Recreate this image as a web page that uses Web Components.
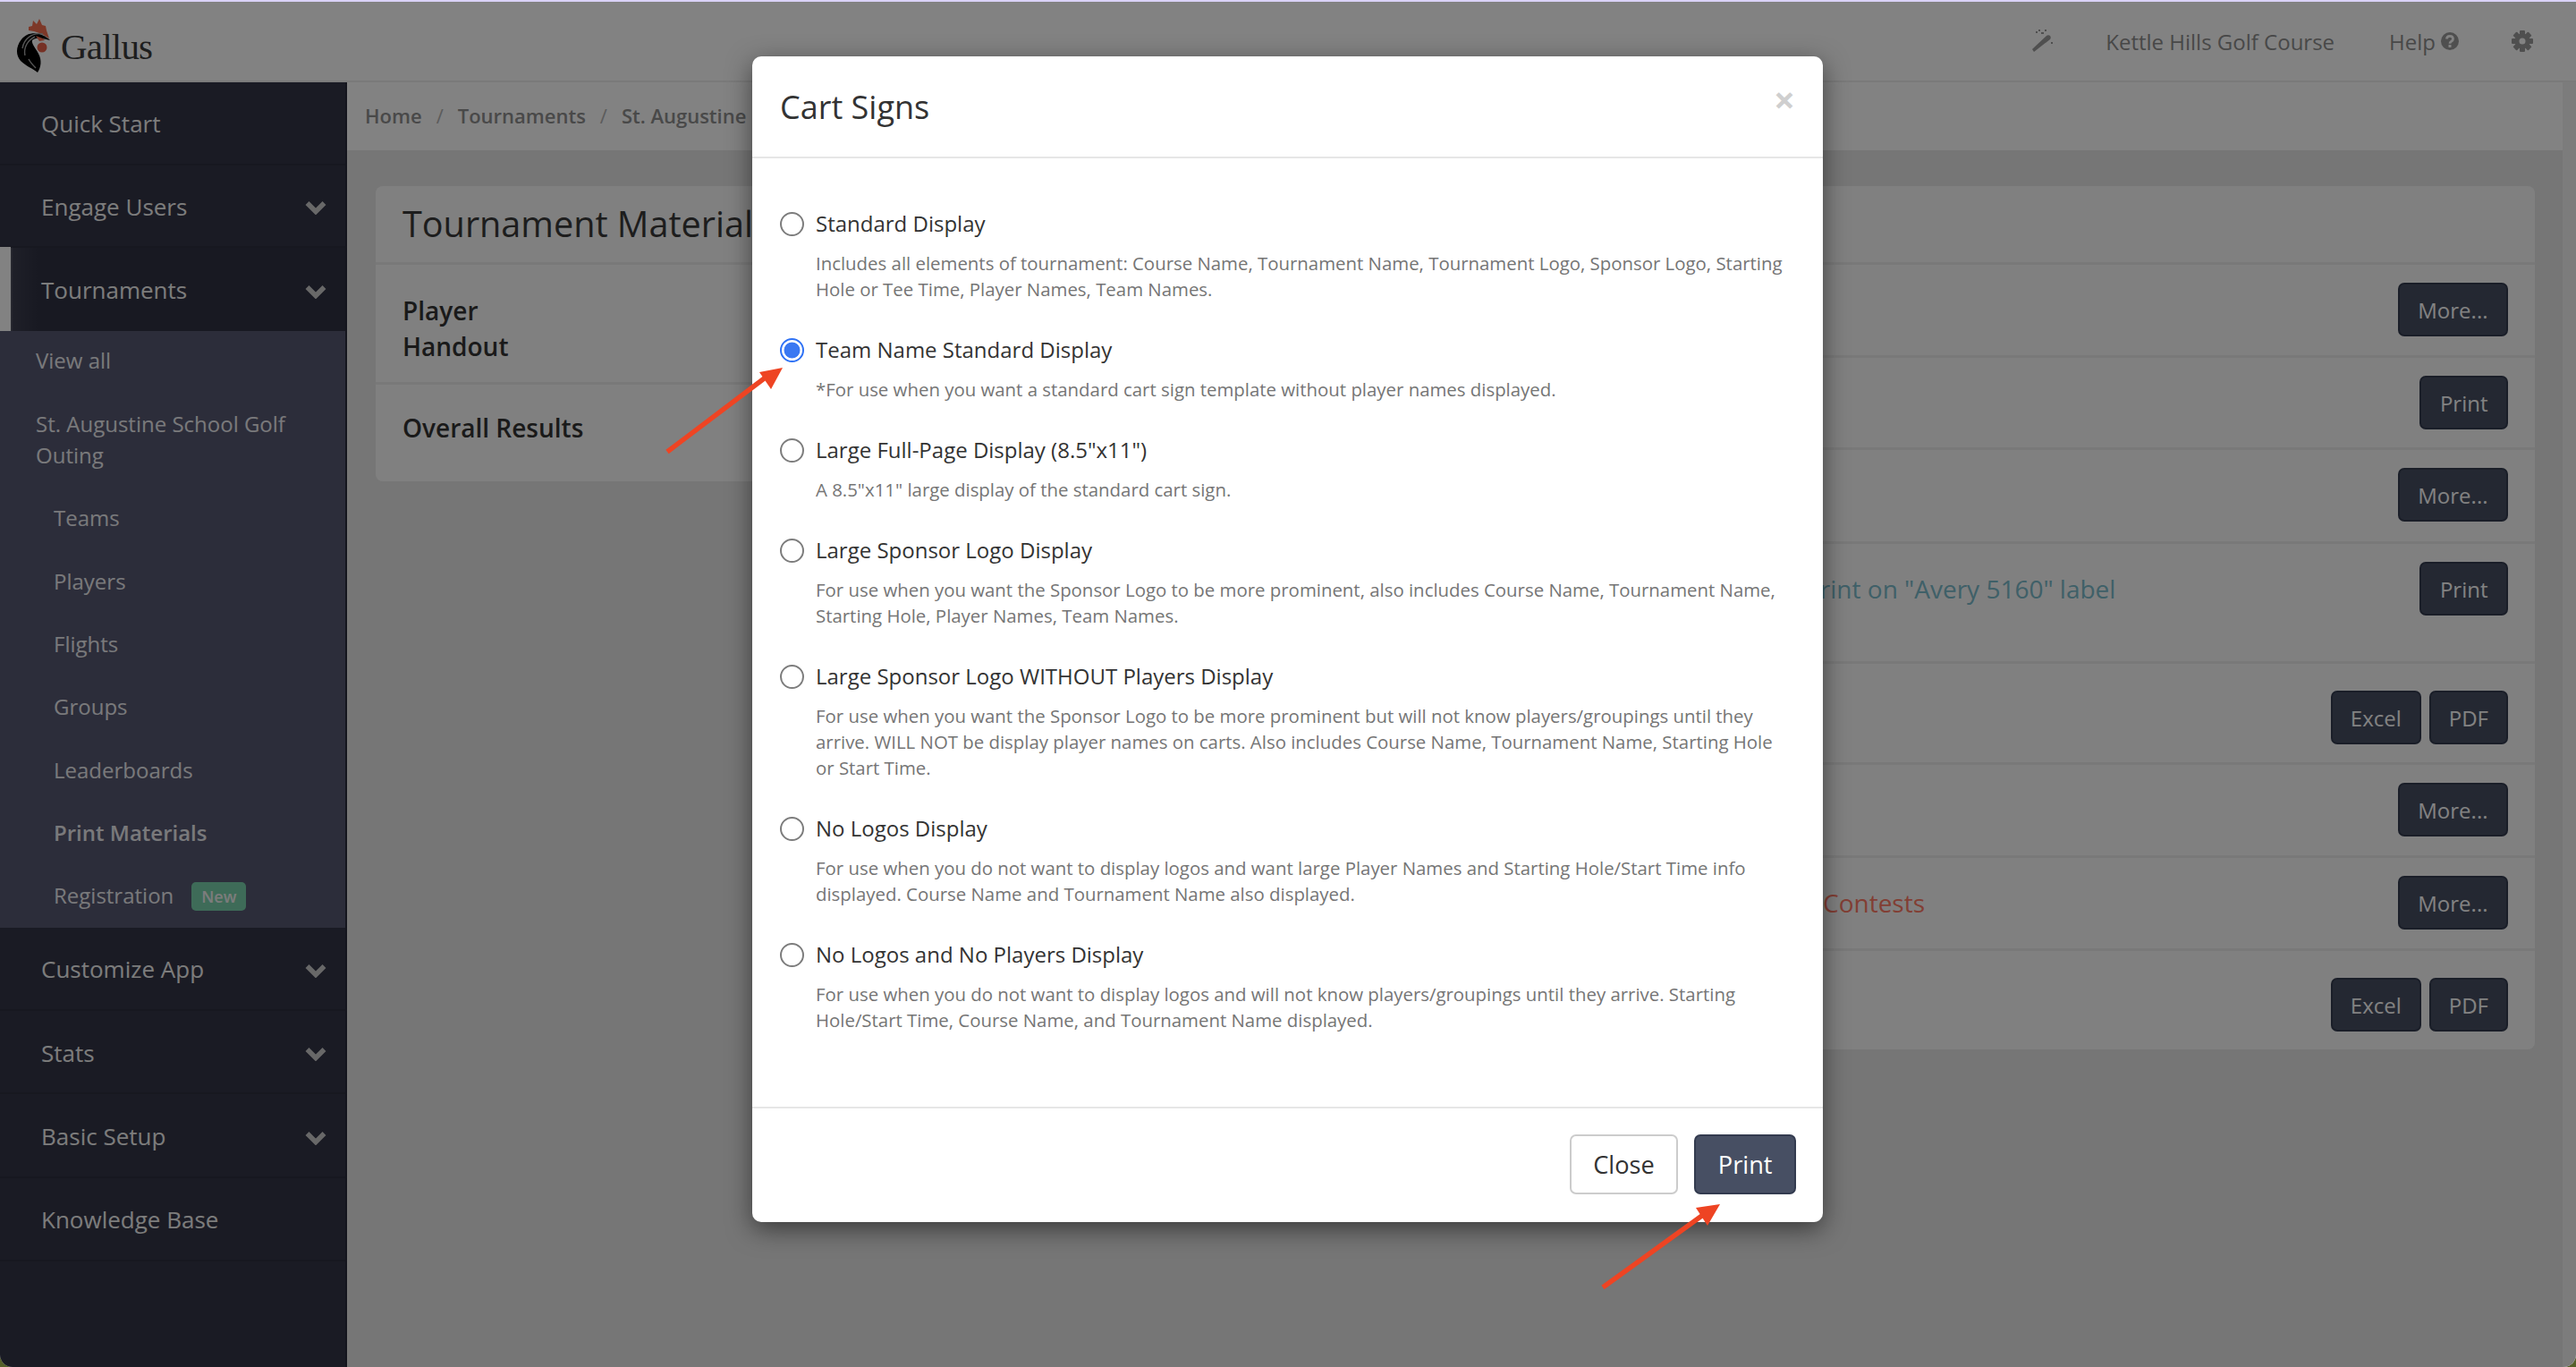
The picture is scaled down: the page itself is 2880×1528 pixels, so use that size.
<!DOCTYPE html>
<html lang="en">
<head>
<meta charset="utf-8">
<title>Cart Signs</title>
<style>
    html, body { margin: 0; padding: 0; background: #55602a; }
    body { font-family: "Open Sans", "Liberation Sans", sans-serif; }
</style>
</head>
<body>
<gallus-app>
    <top-bar slot="top" course="Kettle Hills Golf Course"></top-bar>

    <side-nav slot="side">
        <nav-item>Quick Start</nav-item>
        <nav-item arrow>Engage Users</nav-item>
        <nav-item arrow active>Tournaments</nav-item>
        <sub-menu>
            <sub-item flush>View all</sub-item>
            <sub-item flush tall>St. Augustine School Golf Outing</sub-item>
            <sub-item>Teams</sub-item>
            <sub-item>Players</sub-item>
            <sub-item>Flights</sub-item>
            <sub-item>Groups</sub-item>
            <sub-item>Leaderboards</sub-item>
            <sub-item strong>Print Materials</sub-item>
            <sub-item badge="New">Registration</sub-item>
        </sub-menu>
        <nav-item low arrow>Customize App</nav-item>
        <nav-item low arrow>Stats</nav-item>
        <nav-item low arrow>Basic Setup</nav-item>
        <nav-item low>Knowledge Base</nav-item>
    </side-nav>

    <bread-crumbs slot="crumbs" trail="Home|Tournaments|St. Augustine"></bread-crumbs>

    <material-panel slot="left" title="Tournament Materials">
        <material-row h="131" pad="31"><b-label>Player<br>Handout</b-label></material-row>
        <material-row h="108" pad="28"><b-label>Overall Results</b-label></material-row>
    </material-panel>

    <material-panel slot="right">
        <material-row h="101"><ui-button>More...</ui-button></material-row>
        <material-row h="100"><ui-button>Print</ui-button></material-row>
        <material-row h="102"><ui-button>More...</ui-button></material-row>
        <material-row h="131"><row-link offset="768">Print on "Avery 5160" label</row-link><ui-button>Print</ui-button></material-row>
        <material-row h="110" top="30" style="--btn-pad: 20px"><ui-button>Excel</ui-button><ui-button>PDF</ui-button></material-row>
        <material-row h="101"><ui-button>More...</ui-button></material-row>
        <material-row h="101"><row-link tone="red" offset="788">Contests</row-link><ui-button>More...</ui-button></material-row>
        <material-row h="110" top="30" style="--btn-pad: 20px"><ui-button>Excel</ui-button><ui-button>PDF</ui-button></material-row>
    </material-panel>

    <cart-modal slot="modal" heading="Cart Signs">
        <sign-option label="Standard Display">Includes all elements of tournament: Course Name, Tournament Name, Tournament Logo, Sponsor Logo, Starting Hole or Tee Time, Player Names, Team Names.</sign-option>
        <sign-option label="Team Name Standard Display" checked>*For use when you want a standard cart sign template without player names displayed.</sign-option>
        <sign-option label='Large Full-Page Display (8.5"x11")'>A 8.5"x11" large display of the standard cart sign.</sign-option>
        <sign-option label="Large Sponsor Logo Display">For use when you want the Sponsor Logo to be more prominent, also includes Course Name, Tournament Name, Starting Hole, Player Names, Team Names.</sign-option>
        <sign-option label="Large Sponsor Logo WITHOUT Players Display">For use when you want the Sponsor Logo to be more prominent but will not know players/groupings until they arrive. WILL NOT be display player names on carts. Also includes Course Name, Tournament Name, Starting Hole or Start Time.</sign-option>
        <sign-option label="No Logos Display">For use when you do not want to display logos and want large Player Names and Starting Hole/Start Time info displayed. Course Name and Tournament Name also displayed.</sign-option>
        <sign-option label="No Logos and No Players Display">For use when you do not want to display logos and will not know players/groupings until they arrive. Starting Hole/Start Time, Course Name, and Tournament Name displayed.</sign-option>
    </cart-modal>

    <note-arrows slot="arrows"></note-arrows>
</gallus-app>

<script>
class GallusApp extends HTMLElement {
    constructor() {
        super();
        this.attachShadow({ mode: 'open' });
    }

    connectedCallback() {
        this.shadowRoot.innerHTML = `
            <style>
                :host { display: block; position: relative; width: 2880px; height: 1528px; overflow: hidden; border-radius: 0 0 14px 14px; }
                .frame { display: flex; flex-direction: column; height: 100%; background: #e7e7e7; }
                .strip { height: 2px; background: #d9d2f7; position: relative; z-index: 3; flex: none; }
                .under { flex: 1; display: flex; min-height: 0; }
                main { flex: 1; display: flex; flex-direction: column; min-width: 0; }
                .panels { display: grid; grid-template-columns: 800px 1fr; align-items: start; margin: 40px 31px 0 32px; }
                .track { width: 15px; background: #f3f3f3; flex: none; }
                .shade { position: absolute; inset: 2px 0 0 0; background: rgba(0, 0, 0, .49); }
            </style>
            <div class="frame">
                <div class="strip"></div>
                <slot name="top"></slot>
                <div class="under">
                    <slot name="side"></slot>
                    <main>
                        <slot name="crumbs"></slot>
                        <div class="panels">
                            <slot name="left"></slot>
                            <slot name="right"></slot>
                        </div>
                    </main>
                    <div class="track"></div>
                </div>
            </div>
            <div class="shade"></div>
            <slot name="modal"></slot>
            <slot name="arrows"></slot>
        `;
    }
}

class TopBar extends HTMLElement {
    constructor() {
        super();
        this.attachShadow({ mode: 'open' });
    }

    connectedCallback() {
        const gearTeeth = [0, 45, 90, 135, 180, 225, 270, 315]
            .map((a) => `<rect x="9" y="0" width="6" height="6" rx="1" transform="rotate(${a} 12 12)"/>`).join('');
        this.shadowRoot.innerHTML = `
            <style>
                :host { display: flex; align-items: center; height: 90px; flex: none; box-sizing: border-box; background: #fff; border-bottom: 2px solid #efefef; color: #8e8e8e; font-size: 24px; }
                .logo { display: flex; align-items: center; margin-left: 10px; padding-top: 12px; }
                .logo svg { display: block; }
                .name { font-family: "Liberation Serif", serif; font-size: 41px; color: #3c3c3c; margin-left: -12px; letter-spacing: -.8px; }
                .tools { margin-left: auto; display: flex; align-items: center; }
                .tools svg { display: block; }
                .wand { margin-right: 57px; }
                .course { margin-right: 61px; }
                .help { display: flex; align-items: center; gap: 6px; margin-right: 59px; }
                .gear { margin-right: 48px; }
            </style>
            <div class="logo">
                <svg width="70" height="75" viewBox="0 0 70 75">
                    <path fill="#f56e50" d="M22 15l4-1 1-6 4 4 3-6 3 7 4 1 1 5 2 6 1 3-8-5-9-3-6-1z"/>
                    <path fill="#000" d="M46 30C38 22 23 18 14 29 7 38 8 47 13 53c6 6 13 8 19 13 4-6 5-14 1-21-3-6-8-11-7-15 4-4 13-2 20 0z"/>
                    <path fill="none" stroke="#a8a8a8" stroke-width="1.4" d="M38 23C26 21 17 28 15 39M18 47C16 38 21 30 29 26M22 51c2 4 5 7 8 10"/>
                    <path fill="#f56e50" d="M30 25l8 3 2 2-6 1z"/>
                    <circle cx="37" cy="38" r="5.5" fill="#e8604a"/>
                </svg>
                <span class="name">Gallus</span>
            </div>
            <div class="tools">
                <svg class="wand" width="26" height="26" viewBox="0 0 26 26" fill="#9c9c9c">
                    <path d="M3 25l-2-3L17 7c1-1 3-1 4 0s1 3 0 4z"/>
                    <rect x="5" y="2" width="2" height="2"/><rect x="11" y="3" width="3" height="2"/><rect x="8" y="0" width="2" height="2"/><rect x="22" y="14" width="2" height="2"/><rect x="15" y="0" width="2" height="2"/>
                </svg>
                <span class="course">${this.getAttribute('course')}</span>
                <span class="help">Help
                    <svg width="20" height="20" viewBox="0 0 20 20">
                        <circle cx="10" cy="10" r="10" fill="#9c9c9c"/>
                        <path fill="none" stroke="#fff" stroke-width="2.8" d="M6.5 7.6c0-4.400 7-4.400 7 0 0 2.800-3.500 2.400-3.500 5.200"/>
                        <rect x="8.500" y="14" width="3" height="3" fill="#fff"/>
                    </svg>
                </span>
                <svg class="gear" width="24" height="24" viewBox="0 0 24 24" fill="#9c9c9c">
                    ${gearTeeth}
                    <path fill-rule="evenodd" d="M12 3.500a8.500 8.500 0 1 0 0 17 8.500 8.500 0 0 0 0-17zm0 5a3.500 3.500 0 1 1 0 7 3.500 3.500 0 0 1 0-7z"/>
                </svg>
            </div>
        `;
    }
}

class SideNav extends HTMLElement {
    constructor() {
        super();
        this.attachShadow({ mode: 'open' });
    }

    connectedCallback() {
        this.shadowRoot.innerHTML = `
            <style>
                :host { display: flex; flex-direction: column; width: 388px; flex: none; box-sizing: border-box; background: #333547; border-right: 2px solid #282a3a; }
            </style>
            <slot></slot>
        `;
    }
}

class NavItem extends HTMLElement {
    constructor() {
        super();
        this.attachShadow({ mode: 'open' });
    }

    connectedCallback() {
        const arrow = this.hasAttribute('arrow')
            ? `<svg width="24" height="16" viewBox="0 0 24 16"><path fill="none" stroke="#cdcdcd" stroke-width="5.500" d="M2.500 3l9.500 9.500L21.500 3"/></svg>`
            : '';
        this.shadowRoot.innerHTML = `
            <style>
                :host { display: flex; align-items: center; justify-content: space-between; box-sizing: border-box; height: 92.600px; padding: 2px 21px 0 46px; border-bottom: 2px solid #2d2f40; color: #f4f4f4; font-size: 26px; position: relative; }
                :host([low]) { height: 93.300px; }
                :host([active]) { background: linear-gradient(90deg, #5c5d68 12px, #3d3f50 14px, #2f3143 44px); border-bottom: 0; }
                :host([active])::before { content: ""; position: absolute; left: 0; top: -1px; bottom: 0; width: 12px; background: #fff; }
                svg { display: block; margin-top: 3px; }
            </style>
            <span><slot></slot></span>
            ${arrow}
        `;
    }
}

class SubMenu extends HTMLElement {
    constructor() {
        super();
        this.attachShadow({ mode: 'open' });
    }

    connectedCallback() {
        this.shadowRoot.innerHTML = `
            <style>
                :host { display: block; background: #565973; height: 667px; flex: none; }
            </style>
            <slot></slot>
        `;
    }
}

class SubItem extends HTMLElement {
    constructor() {
        super();
        this.attachShadow({ mode: 'open' });
    }

    connectedCallback() {
        const badge = this.getAttribute('badge');
        this.shadowRoot.innerHTML = `
            <style>
                :host { display: flex; align-items: center; box-sizing: border-box; min-height: 70.300px; padding: 15.600px 40px 19.600px 60px; font-size: 24px; line-height: 35.150px; color: #eeeef2; }
                :host([flush]) { padding-left: 40px; }
                :host([strong]) { font-weight: 600; }
                .badge { margin-left: 20px; width: 61px; height: 32px; border-radius: 5px; background: #7bd3ac; color: #f4f4f4; font-size: 18px; font-weight: 600; line-height: 32px; text-align: center; margin-top: 3px; }
            </style>
            <span><slot></slot></span>
            ${badge ? `<span class="badge">${badge}</span>` : ''}
        `;
    }
}

class BreadCrumbs extends HTMLElement {
    constructor() {
        super();
        this.attachShadow({ mode: 'open' });
    }

    connectedCallback() {
        const parts = this.getAttribute('trail').split('|')
            .map((p) => `<span>${p}</span>`).join('<i>/</i>');
        this.shadowRoot.innerHTML = `
            <style>
                :host { display: flex; align-items: center; box-sizing: border-box; height: 76px; flex: none; padding: 0 0 2px 20px; background: #fff; color: #8f8f8f; font-size: 22px; font-weight: 600; white-space: nowrap; }
                i { font-style: normal; font-weight: 400; color: #b5b5b5; margin: 0 16px; }
            </style>
            ${parts}
        `;
    }
}

class MaterialPanel extends HTMLElement {
    constructor() {
        super();
        this.attachShadow({ mode: 'open' });
    }

    connectedCallback() {
        const title = this.getAttribute('title') || '';
        this.shadowRoot.innerHTML = `
            <style>
                :host { display: flex; flex-direction: column; gap: 3px; background: #eeeeee; border-radius: 8px; overflow: hidden; }
                .head { display: flex; align-items: center; box-sizing: border-box; height: 85px; padding: 0 30px 2px 30px; background: #fbfbfb; font-size: 39.600px; color: #3a3a3a; white-space: nowrap; }
            </style>
            <div class="head">${title}</div>
            <slot></slot>
        `;
    }
}

class MaterialRow extends HTMLElement {
    constructor() {
        super();
        this.attachShadow({ mode: 'open' });
    }

    connectedCallback() {
        const top = this.getAttribute('pad') || this.getAttribute('top') || '20';
        this.shadowRoot.innerHTML = `
            <style>
                :host { display: flex; align-items: flex-start; gap: 9px; box-sizing: border-box; background: #fbfbfb; padding: ${top}px 30px 0 30px; height: ${this.getAttribute('h')}px; }
            </style>
            <slot></slot>
        `;
        if (!this.hasAttribute('pad')) this.style.justifyContent = 'flex-end';
    }
}

class BLabel extends HTMLElement {
    constructor() {
        super();
        this.attachShadow({ mode: 'open' });
    }

    connectedCallback() {
        this.shadowRoot.innerHTML = `
            <style>
                :host { display: block; font-size: 28px; font-weight: 600; line-height: 40px; color: #333; }
            </style>
            <slot></slot>
        `;
    }
}

class RowLink extends HTMLElement {
    constructor() {
        super();
        this.attachShadow({ mode: 'open' });
    }

    connectedCallback() {
        const red = this.getAttribute('tone') === 'red';
        this.shadowRoot.innerHTML = `
            <style>
                :host { display: block; margin-right: auto; margin-left: ${this.getAttribute('offset')}px; font-size: 28px; line-height: 60px; white-space: nowrap; color: ${red ? '#ff7b66' : '#7cbccc'}; }
            </style>
            <slot></slot>
        `;
    }
}

class UiButton extends HTMLElement {
    constructor() {
        super();
        this.attachShadow({ mode: 'open' });
    }

    connectedCallback() {
        this.shadowRoot.innerHTML = `
            <style>
                :host { display: inline-flex; align-items: center; justify-content: center; box-sizing: border-box; height: var(--btn-h, 60px); padding: 0 var(--btn-pad, 20.500px); border-radius: 7px; font-size: var(--btn-size, 24px); background: #474f63; border: 2px solid #333b4f; color: #fff; flex: none; }
                :host([plain]) { background: #fff; border-color: #ccc; color: #333; }
            </style>
            <slot></slot>
        `;
    }
}

class CartModal extends HTMLElement {
    constructor() {
        super();
        this.attachShadow({ mode: 'open' });
    }

    connectedCallback() {
        this.shadowRoot.innerHTML = `
            <style>
                :host { position: absolute; left: 841px; top: 63px; width: 1197px; height: 1303px; display: flex; flex-direction: column; background: #fff; border-radius: 10px; box-shadow: 0 8px 28px rgba(0, 0, 0, .5); }
                header { display: flex; align-items: center; justify-content: space-between; box-sizing: border-box; height: 114px; padding: 0 31px; border-bottom: 2px solid #e6e6e6; flex: none; }
                h2 { margin: 0; font-size: 36px; font-weight: 400; color: #333; position: relative; }
                .x { font-size: 42px; font-weight: 700; line-height: 1; color: #cfcfcf; position: relative; top: -8px; }
                .body { flex: 1; padding: 55px 33px 0 31px; display: flex; flex-direction: column; gap: 35px; }
                footer { display: flex; justify-content: flex-end; gap: 18px; box-sizing: border-box; height: 129px; padding: 29px 30px 0 0; border-top: 2px solid #e6e6e6; flex: none; --btn-h: 67px; --btn-size: 27.200px; --btn-pad: 24.500px; }
            </style>
            <header>
                <h2>${this.getAttribute('heading')}</h2>
                <span class="x">×</span>
            </header>
            <div class="body"><slot></slot></div>
            <footer>
                <ui-button plain>Close</ui-button>
                <ui-button>Print</ui-button>
            </footer>
        `;
    }
}

class SignOption extends HTMLElement {
    constructor() {
        super();
        this.attachShadow({ mode: 'open' });
    }

    connectedCallback() {
        const checked = this.hasAttribute('checked') ? 'checked' : '';
        this.shadowRoot.innerHTML = `
            <style>
                :host { display: grid; grid-template-columns: 40px 1fr; }
                input { appearance: none; -webkit-appearance: none; box-sizing: border-box; width: 27px; height: 27px; margin: 5px 0 0 0; border: 2px solid #7d7d7d; border-radius: 50%; background: #fff; }
                input:checked { border-color: #2f72f5; background: radial-gradient(circle, #3a78f2 0 8.500px, #fff 9.300px); }
                label { font-size: 24px; line-height: 36px; color: #333; }
                p { grid-column: 2; margin: 11.500px 0 0 0; font-size: 20.400px; line-height: 29px; color: #757575; }
            </style>
            <input type="radio" name="sign" id="r" ${checked}>
            <label for="r">${this.getAttribute('label')}</label>
            <p style="margin-bottom: .5px"><slot></slot></p>
        `;
    }
}

class NoteArrows extends HTMLElement {
    constructor() {
        super();
        this.attachShadow({ mode: 'open' });
    }

    connectedCallback() {
        this.shadowRoot.innerHTML = `
            <style>
                :host { position: absolute; inset: 0; pointer-events: none; }
                svg { display: block; }
            </style>
            <svg width="2880" height="1528" viewBox="0 0 2880 1528">
                <g fill="#ee4423" stroke="none">
                    <path d="M875 411l-26 5 13 19z"/>
                    <path d="M1923 1346l-27 4 13 20z"/>
                </g>
                <g fill="none" stroke="#ee4423" stroke-width="5.500">
                    <path d="M746 505L857 421"/>
                    <path d="M1792 1439L1904 1358"/>
                </g>
            </svg>
        `;
    }
}

customElements.define('gallus-app', GallusApp);
customElements.define('top-bar', TopBar);
customElements.define('side-nav', SideNav);
customElements.define('nav-item', NavItem);
customElements.define('sub-menu', SubMenu);
customElements.define('sub-item', SubItem);
customElements.define('bread-crumbs', BreadCrumbs);
customElements.define('material-panel', MaterialPanel);
customElements.define('material-row', MaterialRow);
customElements.define('b-label', BLabel);
customElements.define('row-link', RowLink);
customElements.define('ui-button', UiButton);
customElements.define('cart-modal', CartModal);
customElements.define('sign-option', SignOption);
customElements.define('note-arrows', NoteArrows);
</script>
</body>
</html>
